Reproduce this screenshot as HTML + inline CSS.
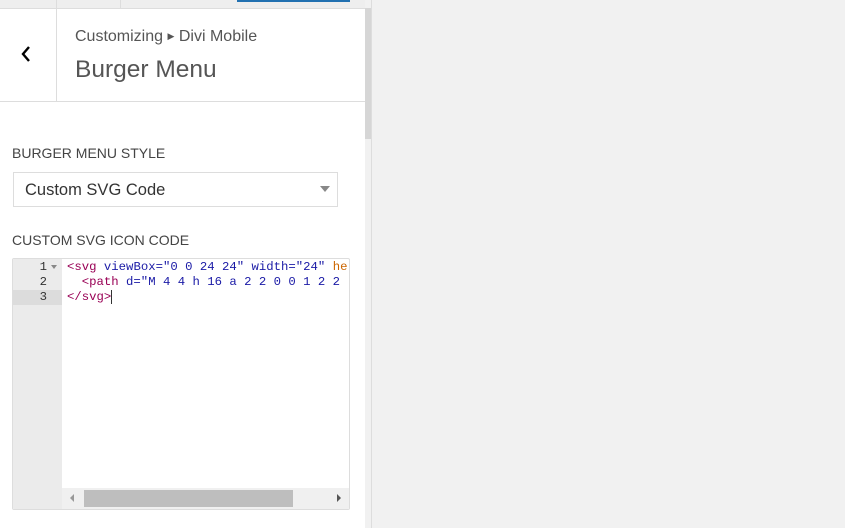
<!DOCTYPE html>
<html><head><style>
body{margin:0;width:845px;height:528px;background:#f1f1f1;position:relative;overflow:hidden;font-family:"Liberation Sans",sans-serif}
.a{position:absolute}
.mono{font-family:"Liberation Mono",monospace;font-size:12.3px;line-height:15px;white-space:pre}
</style></head><body>
<div class="a" style="left:0;top:0;width:365px;height:8px;background:#eee;border-bottom:1px solid #ddd"></div>
<div class="a" style="left:56px;top:0;width:1px;height:8px;background:#ddd"></div>
<div class="a" style="left:120px;top:0;width:1px;height:8px;background:#ddd"></div>
<div class="a" style="left:237px;top:0;width:113px;height:2px;background:#2271b1"></div>
<div class="a" style="left:0;top:9px;width:365px;height:519px;background:#fff"></div>
<div class="a" style="left:365px;top:0;width:6px;height:528px;background:#f1f1f1"></div>
<div class="a" style="left:365px;top:8px;width:6px;height:131px;background:#d6d6d6"></div>
<div class="a" style="left:371px;top:0;width:1px;height:528px;background:#ddd"></div>
<div class="a" style="left:56px;top:9px;width:1px;height:92px;background:#ddd"></div>
<div class="a" style="left:0;top:101px;width:365px;height:1px;background:#ddd"></div>
<svg class="a" style="left:18px;top:44px" width="16" height="20"><path d="M11 3 L5 10 L11 17" stroke="#000" stroke-width="2.4" fill="none"/></svg>
<div class="a" style="left:75px;top:28px;font-size:16px;color:#555">Customizing <span style="font-size:9px;position:relative;top:-2px">▶</span> Divi Mobile</div>
<div class="a" style="left:75px;top:56px;font-size:24.5px;color:#555;font-weight:300">Burger Menu</div>
<div class="a" style="left:12px;top:145px;font-size:14px;color:#444">BURGER MENU STYLE</div>
<div class="a" style="left:13px;top:172px;width:323px;height:33px;border:1px solid #ddd;background:#fff"></div>
<div class="a" style="left:25px;top:181px;font-size:16.5px;color:#333">Custom SVG Code</div>
<div class="a" style="left:320px;top:186px;width:0;height:0;border-left:5px solid transparent;border-right:5px solid transparent;border-top:6px solid #888"></div>
<div class="a" style="left:12px;top:232px;font-size:14px;color:#444">CUSTOM SVG ICON CODE</div>
<div class="a" style="left:12px;top:258px;width:336px;height:250px;border:1px solid #ddd;border-radius:2px;background:#fff;overflow:hidden">
 <div class="a" style="left:0;top:0;width:49px;height:250px;background:#ebebeb"></div>
 <div class="a" style="left:0;top:31px;width:49px;height:15px;background:#dcdcdc"></div>
 <div class="a mono" style="left:0;top:1px;width:34px;text-align:right;color:#333">1
2
3</div>
 <div class="a" style="left:38px;top:6px;border-left:3px solid transparent;border-right:3px solid transparent;border-top:4px solid #888"></div>
 <div class="a mono" style="left:54px;top:1px;color:#1a1aa6"><span style="color:#905">&lt;svg</span> <span style="color:#1a1aa6">viewBox=</span>"0 0 24 24" width="24" <span style="color:#c60">he</span>
  <span style="color:#905">&lt;path</span> d="M 4 4 h 16 a 2 2 0 0 1 2 2
<span style="color:#905">&lt;/svg&gt;</span><span style="border-left:1px solid #333"> </span></div>
 <div class="a" style="left:49px;top:229px;width:287px;height:21px;background:#f0f0f0"></div>
 <div class="a" style="left:57px;top:235px;border-top:4px solid transparent;border-bottom:4px solid transparent;border-right:4px solid #999"></div>
 <div class="a" style="left:71px;top:231px;width:209px;height:17px;background:#bebebe"></div>
 <div class="a" style="left:324px;top:235px;border-top:4px solid transparent;border-bottom:4px solid transparent;border-left:4px solid #555"></div>
</div>
</body></html>
